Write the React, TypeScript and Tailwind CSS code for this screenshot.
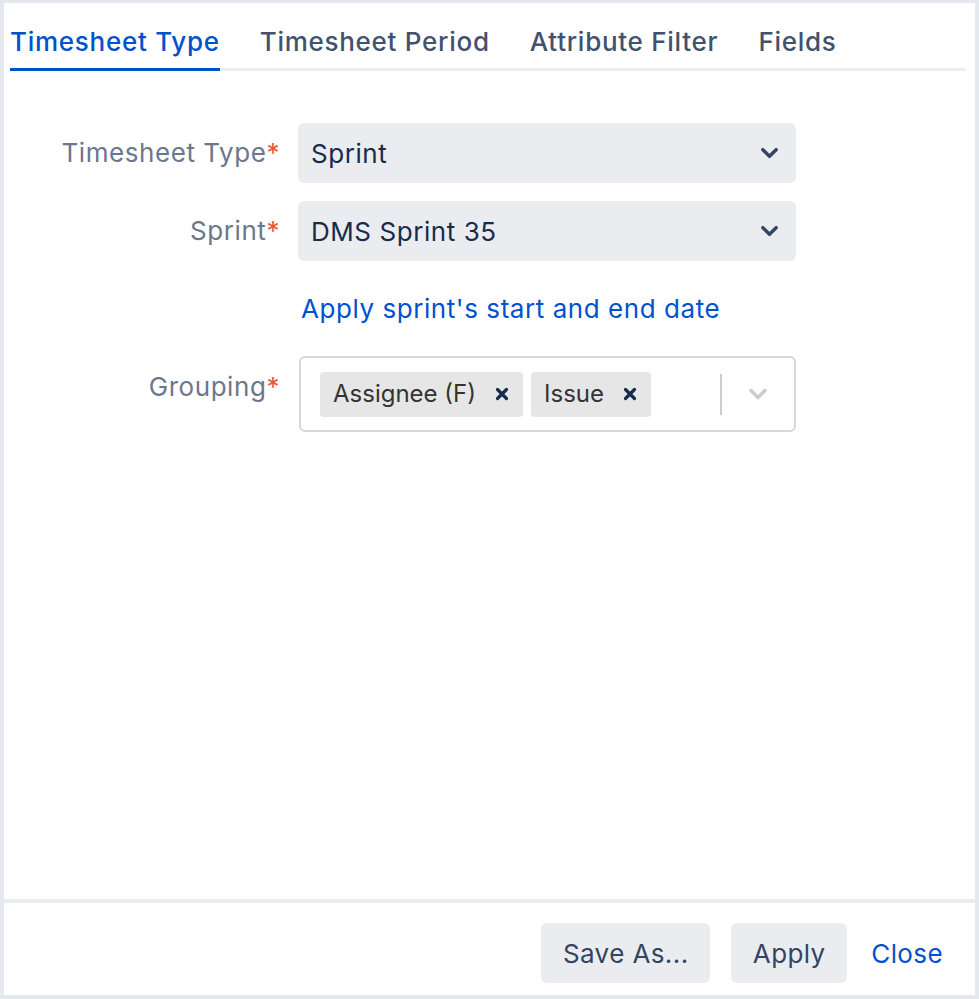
import { useState } from "react";

const tabs = ["Timesheet Type", "Timesheet Period", "Attribute Filter", "Fields"];

function Chevron({ className }: { className?: string }) {
  return (
    <svg viewBox="0 0 20 12" className={className} fill="none" stroke="currentColor" strokeWidth="3.6" strokeLinecap="round" strokeLinejoin="round">
      <path d="M3 2.5l7 7 7-7" />
    </svg>
  );
}

function Cross() {
  return (
    <svg viewBox="0 0 14 14" className="h-[14px] w-[14px] text-[#172b4d]" fill="none" stroke="currentColor" strokeWidth="3.2" strokeLinecap="round">
      <path d="M2.5 2.5l9 9M11.5 2.5l-9 9" />
    </svg>
  );
}

function Label({ text, className = "" }: { text: string; className?: string }) {
  return (
    <div className={`text-right text-[26px] leading-[32px] text-[#6b778c] ${className}`}>
      {text}
      <span className="text-[#e5593a]">*</span>
    </div>
  );
}

function Select({ value }: { value: string }) {
  return (
    <button className="relative flex h-[60px] w-[498px] items-center rounded-[6px] bg-[#ebecf0] pl-[13px] text-left text-[26px] text-[#172b4d]">
      {value}
      <Chevron className="absolute right-[17px] top-1/2 h-[12px] w-[19px] -translate-y-1/2 text-[#344563]" />
    </button>
  );
}

export default function App() {
  const [active, setActive] = useState(0);
  const [groups, setGroups] = useState(["Assignee (F)", "Issue"]);

  return (
    <div
      className="flex h-[999px] w-[979px] flex-col border-x-4 border-t-[3px] border-b-4 border-[#e3e9ef] bg-white tracking-[0.035em]"
      style={{ fontFamily: "Inter, 'Noto Sans', sans-serif" }}
    >
      {/* Tabs */}
      <div className="ml-[6px] mr-[10px] flex gap-[40px] border-b-[3px] border-[#ebecf0] pt-[23px]">
        {tabs.map((t, i) => (
          <button
            key={t}
            onClick={() => setActive(i)}
            className={
              "-mb-[3px] border-b-[3px] pb-[10px] text-[26px] font-medium leading-[32px] tracking-[0.028em] " +
              (i === active ? "border-[#0052cc] text-[#0052cc]" : "border-transparent text-[#42526e]")
            }
          >
            {t}
          </button>
        ))}
      </div>

      {/* Form */}
      <div className="flex-1 pt-[52px]">
        <div className="grid grid-cols-[276px_498px] items-center gap-x-[18px] gap-y-[18px]">
          <Label text="Timesheet Type" />
          <Select value="Sprint" />

          <Label text="Sprint" />
          <Select value="DMS Sprint 35" />

          <div />
          <a href="#" className="pl-[3px] pt-[14px] pb-[13px] text-[26px] leading-[32px] text-[#0052cc]">
            Apply sprint's start and end date
          </a>

          <Label text="Grouping" className="self-start pt-[15px]" />
          <div className="ml-[1px] flex h-[76px] w-[497px] items-center rounded-[6px] border-2 border-[#d6d8dc] pl-[19px] pr-[25px]">
            <div className="flex flex-1 gap-[8px] tracking-normal">
              {groups.map((g) => (
                <div key={g} className="flex h-[45px] items-center gap-[19px] rounded-[4px] bg-[#e6e6e6] pl-[13px] pr-[14px] text-[24px] text-[#333333]">
                  {g}
                  <button onClick={() => setGroups(groups.filter((x) => x !== g))}>
                    <Cross />
                  </button>
                </div>
              ))}
            </div>
            <div className="h-[41px] w-[2px] bg-[#cccccc]" />
            <Chevron className="ml-[25px] h-[12px] w-[22px] text-[#cccccc]" />
          </div>
        </div>
      </div>

      {/* Footer */}
      <div className="flex items-center justify-end gap-[21px] border-t-4 border-[#ebecf0] pt-[20px] pb-[12px] pr-[32px] tracking-[0.025em]">
        <button className="h-[60px] w-[169px] rounded-[6px] bg-[#ebecf0] text-[26px] text-[#344563]">Save As...</button>
        <button className="h-[60px] w-[116px] rounded-[6px] bg-[#ebecf0] text-[26px] text-[#344563]">Apply</button>
        <button className="ml-[3px] text-[26px] text-[#0052cc]">Close</button>
      </div>
    </div>
  );
}
